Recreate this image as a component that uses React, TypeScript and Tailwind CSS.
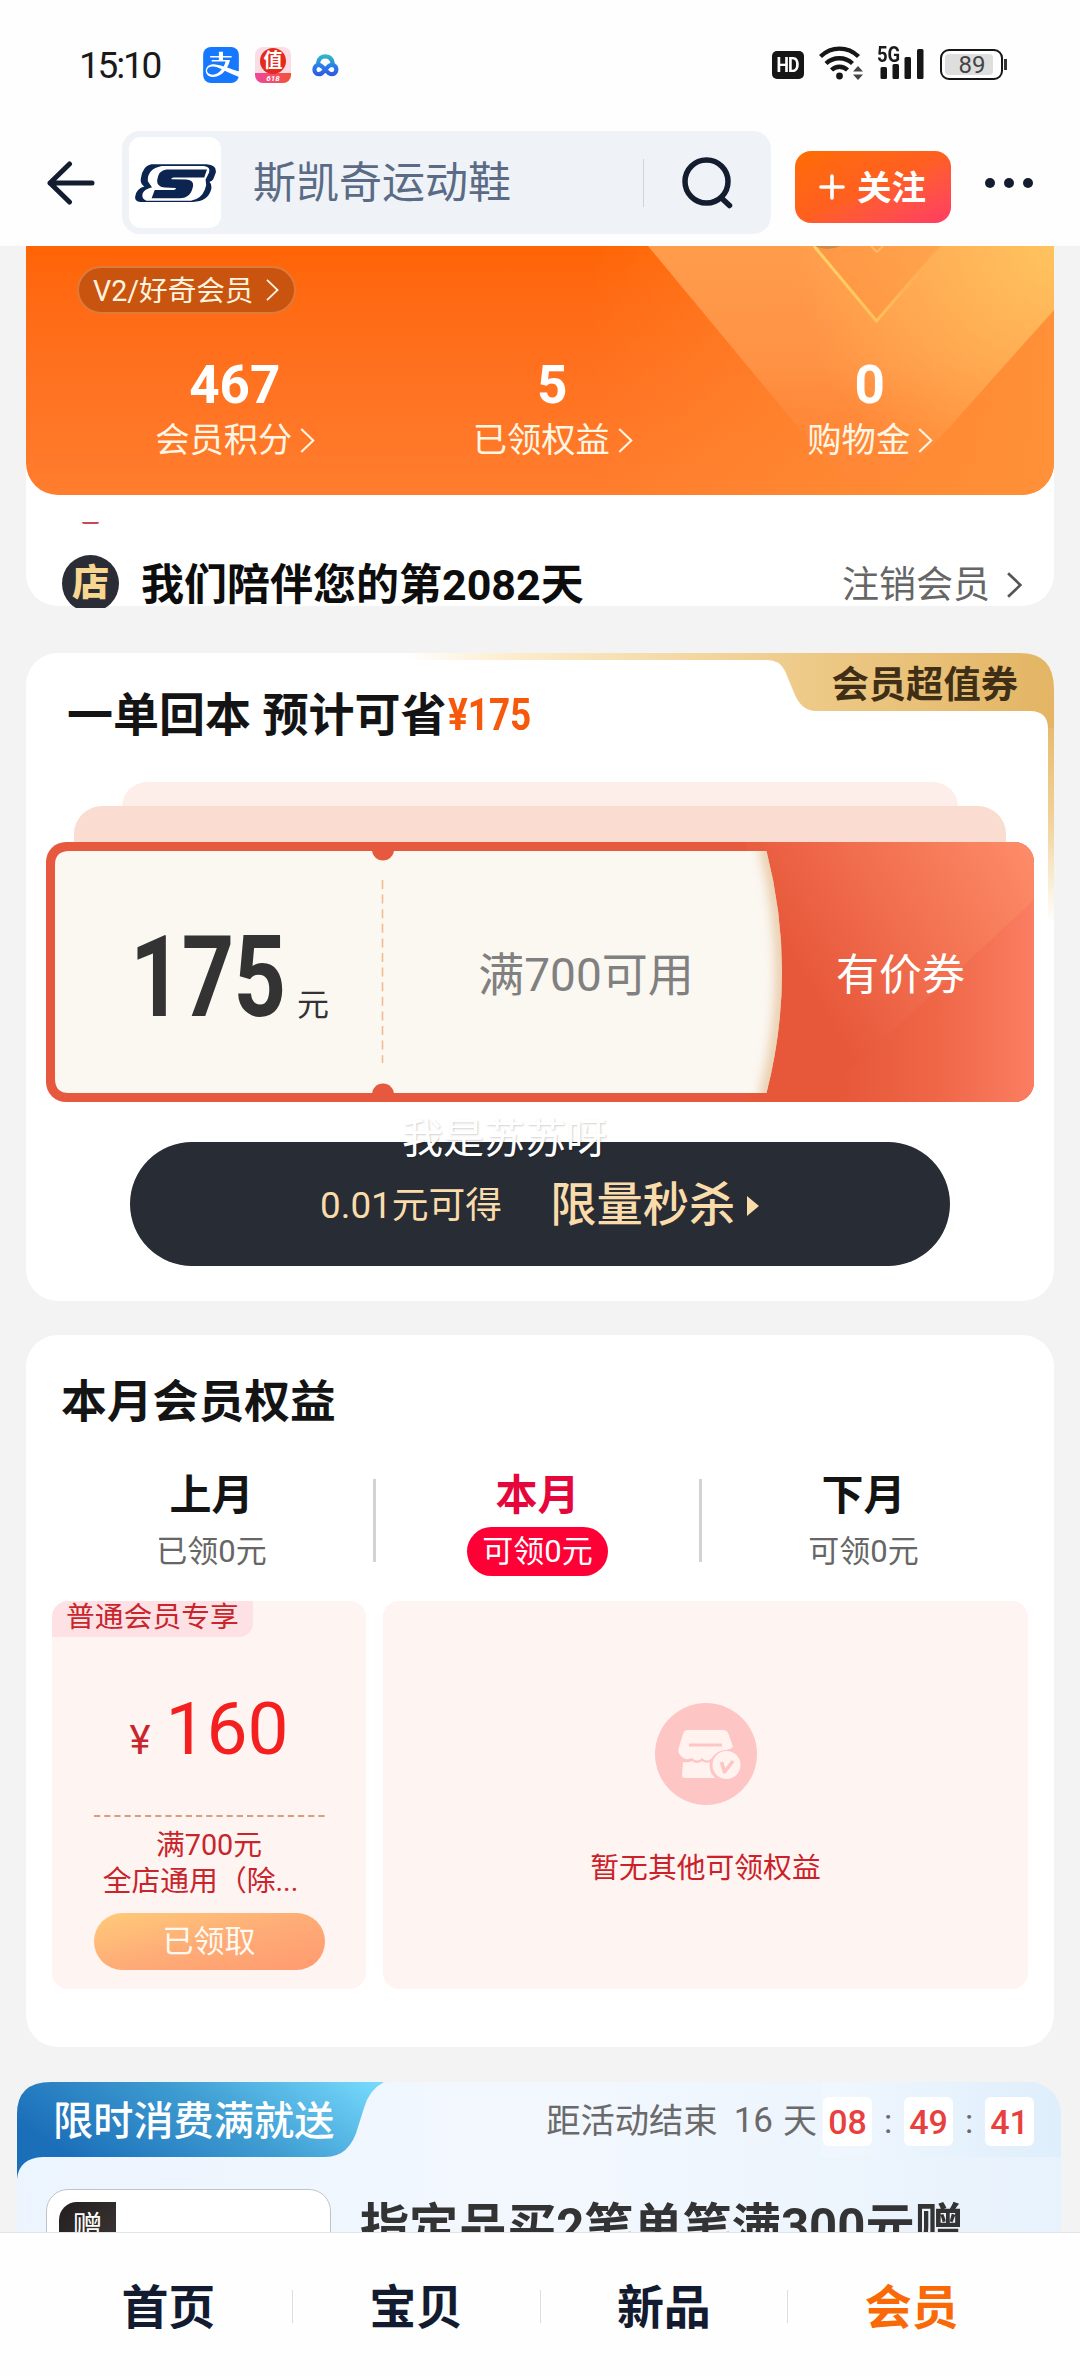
import React from 'react';
import { SiAlipay } from 'react-icons/si';

interface ChevronProps {
  className: string;
  strokeWidth?: number;
}

function Chevron({ className, strokeWidth = 2 }: ChevronProps) {
  return (
    <svg viewBox="0 0 14 24" fill="none" stroke="currentColor" strokeWidth={strokeWidth} className={className}>
      <path d="M1 1L12.5 12L1 23" />
    </svg>
  );
}

function StatusBar() {
  return (
    <div className="flex h-[131px] items-start pl-[79px] pr-[73px] text-[#1a1a1a]">
      <span className="mt-[44px] w-[124px] text-[37px] leading-[44px] tracking-[-2.2px]">15:10</span>
      <SiAlipay className="mt-[47px] h-9 w-9 rounded-lg bg-white text-[#1677ff]" />
      <div className="relative ml-4 mt-[47px] h-9 w-9 overflow-hidden rounded-lg bg-[#fbdde6]">
        <div className="absolute bottom-0 h-[10px] w-full bg-gradient-to-r from-[#f0459a] to-[#f4502f] text-center text-[8px] font-bold italic leading-[11px] text-white">
          618
        </div>
        <div className="absolute left-[5px] top-[1px] h-[26px] w-[26px] rounded-full bg-[#e52a1c] text-center text-[19px] font-bold leading-[25px] text-white">
          值
        </div>
      </div>
      <svg viewBox="0 0 27 23" className="ml-[21px] mt-[54px] h-[23px] w-[27px]" fill="none" strokeWidth="4.2" strokeLinecap="round">
        <defs>
          <linearGradient id="cloud" gradientUnits="userSpaceOnUse" x1="0" y1="0" x2="0" y2="23">
            <stop offset="0" stopColor="#2fc0c4" />
            <stop offset="0.55" stopColor="#2b7bea" />
            <stop offset="1" stopColor="#2f55dd" />
          </linearGradient>
        </defs>
        <path
          d="M6.200 8.500C6.800 4.500 9.800 2.300 13.200 2.300C17 2.300 19.800 4.700 20.600 8.800M6.700 20.200C1 20.200 1 10.800 6.700 10.800C11.500 10.800 14.500 20.200 20 20.200C25.800 20.200 25.800 10.800 20 10.800C17.500 10.800 16 12.500 14.800 14M6.700 20.200C9 20.200 10.500 19 11.500 17.500"
          stroke="url(#cloud)"
        />
      </svg>
      <div className="ml-auto mr-[-1px] mt-[51px] flex h-7 w-8 items-center justify-center rounded-[5px] bg-[#161616] text-[20px] font-bold leading-none tracking-[-1px] text-white">
        <span className="inline-block scale-x-[0.88]">HD</span>
      </div>
      <svg viewBox="0 0 44 34" className="ml-4 mt-[46px] h-[34px] w-11" fill="none" stroke="#161616" strokeWidth="4.4">
        <path d="M1.500 10.500C12.500 0 28.500 0 39.500 10.500M7 17.500C14.500 10.500 26 10.500 33.500 17.500M12.500 24C17 19.700 24 19.700 28.500 24" />
        <circle cx="20.500" cy="30" r="3.400" fill="#161616" stroke="none" />
        <path d="M34 25.500L39 20L44 25.500ZM34 28.500L39 34L44 28.500Z" fill="#444" stroke="none" />
      </svg>
      <div className="relative ml-[14px] mt-[46px] h-[33px] w-[47px]">
        <span className="absolute left-0 top-0 inline-block origin-left scale-x-[0.84] text-[22px] font-bold leading-[17px]">5G</span>
        <svg viewBox="0 0 47 33" className="h-full w-full" fill="#161616">
          <rect x="3.500" y="21" width="6.500" height="12" rx="1.500" />
          <rect x="15.500" y="18" width="6.500" height="15" rx="1.500" />
          <rect x="27.500" y="11" width="6.500" height="22" rx="1.500" />
          <rect x="40" y="3" width="6.500" height="30" rx="1.500" />
        </svg>
      </div>
      <div className="ml-4 mt-[49px] flex h-[31px] w-[63px] rounded-[9px] border-2 border-[#161616] p-[3px]">
        <div className="flex w-[48px] items-center justify-center rounded-[4px] bg-[#dedede] text-[24px] leading-none text-[#444]">
          <span className="pl-1.5">89</span>
        </div>
      </div>
      <div className="ml-[1px] mt-[59px] h-[11px] w-[3px] bg-[#333]" />
    </div>
  );
}

function BrandLogo() {
  return (
    <svg viewBox="393 495 234 113" preserveAspectRatio="none" className="h-[38px] w-[81px]">
      <path
        d="M440 496H600Q631 498 626 522L619 540Q615 546 608 548Q616 556 613 571Q604 606 560 608H408Q390 605 394 590Q398 568 420 562Q407 553 410 538Q415 500 440 496Z"
        fill="#0c2450"
      />
      <path
        d="M426 604Q411 600 415 583Q420 570 442 564L430 546Q428 510 470 501H592Q612 503 607 520L597 541Q601 556 595 571Q584 600 555 604Z"
        fill="#fff"
      />
      <path
        d="M484 511H601L593 535H505Q497 536 498 540L540 541Q562 543 561 558Q556 596 522 597H441L450 572H504Q512 571 511 566L480 565Q455 563 457 543Q461 513 484 511Z"
        fill="#0c2450"
      />
    </svg>
  );
}

function SearchHeader() {
  return (
    <div className="flex h-[115px] items-start pl-[46px]">
      <svg viewBox="0 0 50 44" className="mt-[30px] h-11 w-[50px]" fill="none" stroke="#141c30" strokeWidth="5" strokeLinecap="round" strokeLinejoin="round">
        <path d="M23.500 3L4 22L23.500 41M4 22H46" />
      </svg>
      <div className="ml-[26px] flex h-[103px] w-[649px] items-center rounded-[18px] bg-[#eff3f7] pl-[7px]">
        <div className="flex h-[91px] w-[92px] items-center justify-center rounded-[12px] bg-white">
          <BrandLogo />
        </div>
        <span className="ml-[32px] text-[43px] leading-[50px] text-[#5b6b85]">斯凯奇运动鞋</span>
        <div className="ml-auto h-12 w-px bg-[#cfd4da]" />
        <svg viewBox="0 0 52 52" className="ml-[38px] mr-[37px] h-[52px] w-[52px]" fill="none" stroke="#141c30" strokeWidth="5.500" strokeLinecap="round">
          <circle cx="24.500" cy="24.500" r="21.500" />
          <path d="M40.500 42L47.500 48.500" />
        </svg>
      </div>
      <button className="ml-6 mt-5 flex h-[72px] w-[156px] items-center rounded-[16px] bg-gradient-to-br from-[#ff6d00] via-[#ff5f20] to-[#ff3b62] pl-6 text-white">
        <svg viewBox="0 0 26 26" className="h-[26px] w-[26px]" stroke="#fff" strokeWidth="3.600" strokeLinecap="round">
          <path d="M13 2V24M2 13H24" />
        </svg>
        <span className="ml-3 pt-0.5 text-[34.500px] font-bold leading-10">关注</span>
      </button>
      <div className="ml-[34px] mt-[47px] flex gap-[9px]">
        <i className="h-2.5 w-2.5 rounded-full bg-[#141c30]" />
        <i className="h-2.5 w-2.5 rounded-full bg-[#141c30]" />
        <i className="h-2.5 w-2.5 rounded-full bg-[#141c30]" />
      </div>
    </div>
  );
}

const stats = [
  { value: '467', label: '会员积分' },
  { value: '5', label: '已领权益' },
  { value: '0', label: '购物金' },
];

function MemberCard() {
  return (
    <section className="mx-[26px] h-[360px] rounded-b-[32px] bg-white">
      <div className="relative h-[249px] overflow-hidden rounded-b-[32px] bg-gradient-to-b from-[#ff6405] to-[#ff7d2e]">
        <svg viewBox="0 0 1028 249" className="absolute inset-0 h-full w-full">
          <defs>
            <linearGradient id="vee" x1="0" y1="0" x2="0" y2="1">
              <stop offset="0" stopColor="#ff9c4c" />
              <stop offset="0.450" stopColor="#ff9244" />
              <stop offset="1" stopColor="#ff8038" stopOpacity="0" />
            </linearGradient>
            <radialGradient id="glow" gradientUnits="userSpaceOnUse" cx="1028" cy="0" r="260">
              <stop offset="0" stopColor="#ffc35f" />
              <stop offset="1" stopColor="#ffc35f" stopOpacity="0" />
            </radialGradient>
            <linearGradient id="warm" x1="0.550" y1="0" x2="1" y2="0">
              <stop offset="0" stopColor="#ff9236" stopOpacity="0" />
              <stop offset="1" stopColor="#ff9138" />
            </linearGradient>
            <linearGradient id="veeLine" x1="0" y1="0" x2="1" y2="0">
              <stop offset="0" stopColor="#ffd468" />
              <stop offset="0.500" stopColor="#ffc25c" />
              <stop offset="1" stopColor="#ffb458" stopOpacity="0.200" />
            </linearGradient>
          </defs>
          <rect width="1028" height="249" fill="url(#warm)" />
          <path d="M622 0L845 269L1028 64V0Z" fill="url(#vee)" />
          <path d="M622 0L845 269L1028 64V0Z" fill="url(#glow)" />
          <path d="M788 0L850.500 75L915 0Z" fill="#ff8a38" fillOpacity="0.350" />
          <path d="M788 0L850.500 75L915 0" fill="none" stroke="url(#veeLine)" strokeWidth="3" />
          <path d="M789 0Q801 6 814 0Z" fill="#c98a4a" />
          <path d="M845 0L851 6L857 0" fill="none" stroke="#ffb868" strokeWidth="2" />
        </svg>
        <div className="relative ml-[51px] mt-[20px] flex h-12 w-[219px] items-center rounded-full border-2 border-[#e07a38] bg-[#c9540f] pl-[14px] text-[#fff3df]">
          <span className="pt-0.5 text-[28.600px] leading-9">V2/好奇会员</span>
          <Chevron className="ml-[13px] h-[22px] w-[13px]" />
        </div>
        <div className="relative mt-[42px] flex pl-[50px] text-white">
          {stats.map((s) => (
            <div key={s.label} className="flex w-[317.500px] flex-col items-center">
              <b className="text-[53px] leading-[58px]">{s.value}</b>
              <div className="mt-[4px] flex items-center pl-px text-[#fff6e4]">
                <span className="text-[34.300px] leading-[44px]">{s.label}</span>
                <Chevron className="ml-[8px] h-[25px] w-[15px]" />
              </div>
            </div>
          ))}
        </div>
      </div>
      <div className="ml-[56px] mt-[27px] h-[2px] w-[17px] rounded-b-full bg-[#d04553]" />
      <div className="mt-[31px] flex h-[53px] items-start overflow-hidden pl-9 pr-8">
        <div className="h-[57px] w-[57px] shrink-0 rounded-full bg-[#2a2d36] text-center text-[37px] font-black leading-[58px] text-[#f7d68f]">
          店
        </div>
        <b className="ml-[22px] text-[43px] font-bold leading-[60px] text-[#0d0d0d]">我们陪伴您的第2082天</b>
        <span className="ml-auto text-[37px] leading-[61px] text-[#666]">注销会员</span>
        <Chevron className="ml-[17px] mt-[17px] h-[26px] w-[15px] text-[#555]" strokeWidth={2.5} />
      </div>
    </section>
  );
}

function CouponTicket() {
  return (
    <div className="relative mx-5 flex h-[260px]">
      <svg viewBox="0 0 988 260" className="absolute inset-0 h-full w-full">
        <defs>
          <linearGradient id="ticketRight" gradientUnits="userSpaceOnUse" x1="760" y1="150" x2="985" y2="15">
            <stop offset="0" stopColor="#e7573a" />
            <stop offset="1" stopColor="#fd8b67" />
          </linearGradient>
          <linearGradient id="ticketFold" gradientUnits="userSpaceOnUse" x1="790" y1="0" x2="988" y2="0">
            <stop offset="0" stopColor="#e7573a" />
            <stop offset="0.500" stopColor="#ef6647" />
            <stop offset="1" stopColor="#fb7e62" />
          </linearGradient>
          <filter id="arcShadow" x="-100%" y="-10%" width="300%" height="120%">
            <feGaussianBlur stdDeviation="6" />
          </filter>
          <clipPath id="ticketOuter">
            <rect width="988" height="260" rx="20" />
          </clipPath>
          <clipPath id="paper">
            <path d="M23 9H720.500Q751.500 130 720.500 251H23Q9 251 9 237V23Q9 9 23 9Z" />
          </clipPath>
        </defs>
        <rect width="988" height="260" rx="20" fill="#e7593f" />
        <g clipPath="url(#ticketOuter)">
          <rect x="700" width="288" height="260" fill="url(#ticketRight)" />
          <path d="M988 58L770 260H988Z" fill="url(#ticketFold)" />
        </g>
        <g clipPath="url(#paper)">
          <rect width="760" height="260" fill="#fbf7f1" />
          <path d="M720.500 0V9Q751.500 130 720.500 251V260" fill="none" stroke="#e3bf94" strokeWidth="10" filter="url(#arcShadow)" />
        </g>
        <circle cx="337" cy="7.500" r="11" fill="#e7593f" />
        <circle cx="337" cy="252.500" r="11" fill="#e7593f" />
        <path d="M336.500 38V221" stroke="#f0bd93" strokeWidth="1.600" strokeDasharray="9 5.600" />
      </svg>
      <div className="relative flex w-[337px] pl-[84px]">
        <b className="mt-[76px] w-[167px] origin-left scale-x-[0.810] text-[113px] leading-[120px] tracking-[-1px] text-[#333]">175</b>
        <span className="mt-[143px] text-[32px] leading-10 text-[#333]">元</span>
      </div>
      <div className="relative flex w-[406px] items-center justify-center pt-1.5 text-[46px] text-[#808080]">满700可用</div>
      <div className="relative flex flex-1 items-center pl-[47px] pt-1.5 text-[43px] text-white">有价券</div>
    </div>
  );
}

function CouponCard() {
  return (
    <section className="relative mx-[26px] mt-[47px] h-[648px] rounded-[32px] bg-white">
      <svg viewBox="0 0 1028 300" className="absolute left-0 top-0 h-[300px] w-full">
        <defs>
          <linearGradient id="goldTop" gradientUnits="userSpaceOnUse" x1="380" y1="0" x2="1028" y2="0">
            <stop offset="0" stopColor="#fdebc8" stopOpacity="0" />
            <stop offset="0.160" stopColor="#fcedcd" />
            <stop offset="0.600" stopColor="#eecb8a" />
            <stop offset="1" stopColor="#e3b564" />
          </linearGradient>
          <linearGradient id="goldSide" gradientUnits="userSpaceOnUse" x1="0" y1="50" x2="0" y2="270">
            <stop offset="0" stopColor="#e3b564" />
            <stop offset="0.550" stopColor="#f2d39b" />
            <stop offset="1" stopColor="#fff" />
          </linearGradient>
        </defs>
        <path
          d="M380 0H994Q1028 0 1028 36V76H1022Q1022 58 1004 58H790Q776 58 769 42L759 18Q754 7 741 7H380Z"
          fill="url(#goldTop)"
        />
        <rect x="1022" y="75" width="6" height="195" fill="url(#goldSide)" />
      </svg>
      <span className="absolute right-[36px] top-[9px] text-[37.300px] font-bold leading-[46px] text-[#3f2f16]">会员超值券</span>
      <h2 className="flex items-center pl-[41px] pt-[35px] text-[46px] font-bold leading-[54px] text-[#141414]">
        一单回本 预计可省
        <span className="ml-[2px] inline-block origin-left scale-x-[0.820] text-[45px] text-[#f6590b]">¥175</span>
      </h2>
      <div className="mx-auto mt-[40px] h-[25px] w-[836px] rounded-t-[26px] bg-[#fdeeea]" />
      <div className="mx-auto -mt-px h-9 w-[932px] rounded-t-[28px] bg-[#fadcd1]" />
      <CouponTicket />
      <button className="relative mx-auto mt-10 flex h-[124px] w-[820px] items-center rounded-full bg-[#282c35] pl-[190px] pt-[3px] text-[#fadcab]">
        <span className="text-[36.800px]">0.01元可得</span>
        <span className="ml-[48px] text-[46.300px] font-medium">限量秒杀</span>
        <svg viewBox="0 0 12 20" className="ml-3 h-5 w-3" fill="#fadcab">
          <path d="M0 0L12 10L0 20Z" />
        </svg>
        <span className="absolute left-[272px] top-[-26px] text-[41px] leading-[46px] text-white [text-shadow:1px_1px_2px_rgba(0,0,0,0.18)]">
          我是苏苏呀
        </span>
      </button>
    </section>
  );
}

const months = [
  { name: '上月', amount: '已领0元' },
  { name: '本月', amount: '可领0元', active: true },
  { name: '下月', amount: '可领0元' },
];

function BenefitsCard() {
  return (
    <section className="mx-[26px] mt-[34px] h-[712px] rounded-[32px] bg-white">
      <h2 className="pl-[35px] pt-[41px] text-[45.800px] font-bold leading-[54px] text-[#141414]">本月会员权益</h2>
      <div className="mt-[34px] flex h-[114px] items-start pl-6">
        {months.map((m, i) => (
          <React.Fragment key={m.name}>
            {i > 0 && <div className="mt-[15px] h-[83px] w-[3px] shrink-0 bg-[#d3d3d3]" />}
            <div className="flex w-[323px] flex-col items-center">
              <b className={m.active ? 'text-[42px] leading-[63px] text-[#e5063c]' : 'text-[42px] leading-[63px] text-[#141414]'}>{m.name}</b>
              <span
                className={
                  m.active
                    ? 'rounded-full bg-[#ff0036] px-[15px] text-[31px] leading-[49px] text-white'
                    : 'text-[31px] leading-[49px] text-[#666]'
                }
              >
                {m.amount}
              </span>
            </div>
          </React.Fragment>
        ))}
      </div>
      <div className="mx-[26px] mt-[23px] flex h-[388px] gap-[17px]">
        <div className="flex w-[314px] flex-col items-center overflow-hidden rounded-[16px] bg-[#fef4f1] text-[#c8252c]">
          <span className="self-start rounded-br-[14px] bg-[#fde1e4] px-[14px] pb-[3px] text-[28.800px] leading-[33px]">普通会员专享</span>
          <div className="mt-[47px] flex items-baseline">
            <span className="mr-[15px] text-[40px] leading-[90px]">¥</span>
            <span className="text-[73px] leading-[90px] text-[#f4201f]">160</span>
          </div>
          <svg viewBox="0 0 231 2" className="mt-[29px] h-[2px] w-[231px]">
            <path d="M0 1H231" stroke="#d99f7d" strokeWidth="2" strokeDasharray="6.200 4" />
          </svg>
          <span className="mt-[10px] text-[28.800px] leading-9">满700元</span>
          <span className="mr-[17px] text-[28.800px] leading-[37px]">全店通用（除...</span>
          <button className="mt-[13px] h-[57px] w-[231px] rounded-full bg-gradient-to-br from-[#fecb79] via-[#feac77] to-[#ff9a70] text-[31px] leading-[57px] text-[#fffaf0]">
            已领取
          </button>
        </div>
        <div className="flex flex-1 flex-col items-center rounded-[16px] bg-[#fef4f1] pt-[102px]">
          <svg viewBox="0 0 102 102" className="h-[102px] w-[102px]">
            <circle cx="51" cy="51" r="51" fill="#fec5c5" />
            <path
              d="M33 27H68Q72 27 73.500 31L78 44Q75 47 71 47Q62 47 57 55Q52 60 47 55Q42 60 37 55Q30 58 26 53Q22 50 24 44L28 31Q29 27 33 27Z"
              fill="#fff2ef"
            />
            <path d="M28 59Q34 60 37 58Q42 62 47 58Q51 61 55 59Q53 68 60 75H30Q27 75 27 72Z" fill="#fff2ef" />
            <path d="M34 42H67" stroke="#fec5c5" strokeWidth="3" />
            <circle cx="71.500" cy="62" r="14" fill="#fff2ef" />
            <path d="M66.500 59L69.500 69L78 58" fill="none" stroke="#fec5c5" strokeWidth="3.500" strokeLinejoin="round" />
          </svg>
          <span className="mt-[43px] text-[28.800px] leading-10 text-[#cb2129]">暂无其他可领权益</span>
        </div>
      </div>
    </section>
  );
}

function PromoCard() {
  return (
    <section className="relative ml-[17px] mr-[19px] mt-[35px] h-[200px] rounded-t-[32px] bg-gradient-to-r from-[#ecf4fe] via-[#f3f8fe] to-[#e8f2fc]">
      <div className="absolute right-0 top-0 h-[75px] w-[240px] rounded-tr-[32px] bg-gradient-to-r from-[#f1f7fe] to-[#deeefb]" />
      <svg viewBox="0 0 368 98" className="absolute left-0 top-0 h-[98px] w-[368px]">
        <defs>
          <linearGradient id="promoTab" x1="0" y1="0.400" x2="1" y2="0">
            <stop offset="0" stopColor="#1b6fb9" />
            <stop offset="0.500" stopColor="#3f9dd2" />
            <stop offset="1" stopColor="#78dcff" />
          </linearGradient>
        </defs>
        <path d="M0 97V32Q0 0 34 0H367Q352 8 347 26L341 45Q333 75 308 75H26Q2 76 0 97Z" fill="url(#promoTab)" />
      </svg>
      <div className="relative flex h-[75px] items-center pl-[36px] pr-[27px] pt-[4px]">
        <span className="pt-0.5 text-[40.200px] font-medium text-white">限时消费满就送</span>
        <span className="ml-auto text-[34.300px] text-[#6a6a6a]">距活动结束</span>
        <span className="ml-[16px] text-[35px] text-[#6a6a6a]">16</span>
        <span className="ml-[10px] mr-[6px] text-[34px] text-[#6a6a6a]">天</span>
        {['08', '49', '41'].map((n, i) => (
          <React.Fragment key={n}>
            {i > 0 && <span className="w-8 text-center text-[34px] text-[#6a6a6a]">:</span>}
            <span className="h-[49px] w-[49px] rounded-[6px] bg-white text-center text-[34px] font-medium leading-[51px] text-[#e8403e]">{n}</span>
          </React.Fragment>
        ))}
      </div>
      <div className="relative flex pl-[29px] pt-[32px]">
        <div className="h-[120px] w-[285px] rounded-[22px] border border-[#c0c4c8] bg-white pl-[12px] pt-3">
          <div className="h-[60px] w-[57px] rounded-tl-[18px] bg-gradient-to-br from-[#231f1e] to-[#40393a] text-center text-[30px] leading-[49px] text-white">
            赠
          </div>
        </div>
        <b className="ml-[29px] mt-[9px] text-[49.100px] leading-[58px] text-[#333]">指定品买2笔单笔满300元赠</b>
      </div>
    </section>
  );
}

const navItems = ['首页', '宝贝', '新品', '会员'];

function BottomNav() {
  return (
    <nav className="relative flex h-[144px] shrink-0 items-center border-t border-[#e2e4e6] bg-[#fefefe] px-[45px] pt-1">
      {navItems.map((item, i) => (
        <React.Fragment key={item}>
          {i > 0 && <div className="h-[33px] w-px bg-[#dedede]" />}
          <b className={i === 3 ? 'flex-1 pt-1 text-center text-[47px] text-[#f96a06]' : 'flex-1 pt-1 text-center text-[47px] text-[#131b30]'}>{item}</b>
        </React.Fragment>
      ))}
    </nav>
  );
}

export default function App() {
  return (
    <div className="flex h-[2376px] w-[1080px] flex-col overflow-hidden bg-[#f3f3f3] font-['Roboto','Noto_Sans_CJK_SC',sans-serif]">
      <header className="h-[246px] shrink-0 bg-[#fefefe]">
        <StatusBar />
        <SearchHeader />
      </header>
      <main className="flex-1 overflow-hidden">
        <MemberCard />
        <CouponCard />
        <BenefitsCard />
        <PromoCard />
      </main>
      <BottomNav />
    </div>
  );
}
